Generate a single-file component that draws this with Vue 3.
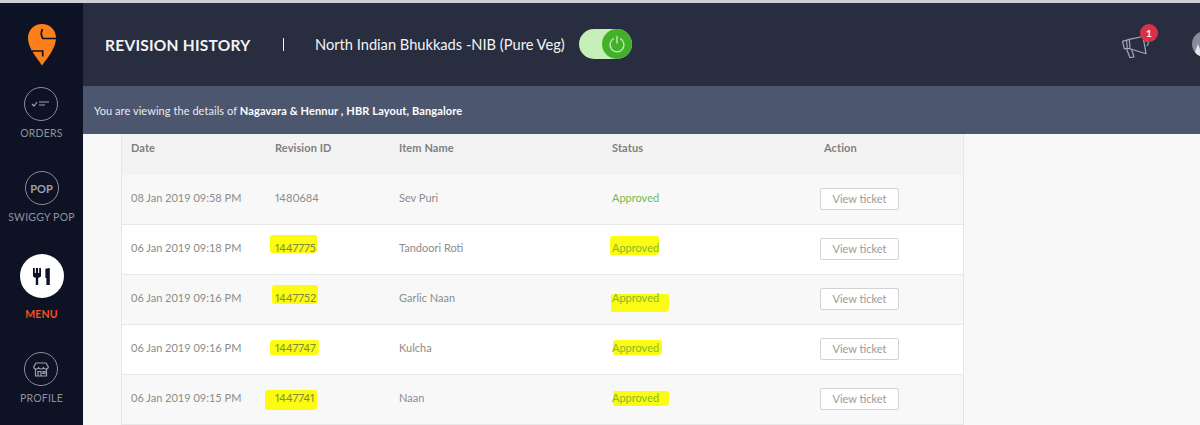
<script setup>
const rows = [
  { date: '08 Jan 2019 09:58 PM', id: '1480684', item: 'Sev Puri' },
  { date: '06 Jan 2019 09:18 PM', id: '1447775', item: 'Tandoori Roti', idMark: { left: -5, top: -6, width: 47, height: 18 }, stMark: { left: -2, top: -5, width: 49, height: 19 } },
  { date: '06 Jan 2019 09:16 PM', id: '1447752', item: 'Garlic Naan', idMark: { left: -3, top: -6, width: 46, height: 19 }, stMark: { left: -1, top: 3, width: 58, height: 18 } },
  { date: '06 Jan 2019 09:16 PM', id: '1447747', item: 'Kulcha', idMark: { left: -5, top: -1, width: 49, height: 15 }, stMark: { left: 1, top: -1, width: 49, height: 15 } },
  { date: '06 Jan 2019 09:15 PM', id: '1447741', item: 'Naan', idMark: { left: -10, top: -1, width: 52, height: 20 }, stMark: { left: 1, top: 0, width: 56, height: 15 } }
]
function box(m) {
  return { left: m.left + 'px', top: m.top + 'px', width: m.width + 'px', height: m.height + 'px' }
}
</script>

<template>
  <div class="page">
    <aside class="side">
      <div class="logo">
        <svg width="28" height="42" viewBox="0 0 28 42">
          <path d="M14 0C6 0 0 6 0 14c0 5 2 9 4 13 3 5 7 10 10 14.500 3-4.500 7-9 10-14.500 2-4 4-8 4-13C28 6 22 0 14 0z" fill="#fc8019" />
          <path d="M14.500 5C13 8 13 12 15 14.500H28M4 27h10.700v5.500" fill="none" stroke="#0d1224" stroke-width="1.700" />
        </svg>
      </div>
      <div class="nav orders">
        <span class="ring">
          <svg width="20" height="10" viewBox="0 0 20 10" fill="none" stroke="#9ea2ae" stroke-width="1.200">
            <path d="M1 5l2 2 3-4M8 3h10M8 6h6" />
          </svg>
        </span>
        <span class="label">ORDERS</span>
      </div>
      <div class="nav pop">
        <span class="ring"><span class="pop-text">POP</span></span>
        <span class="label">SWIGGY POP</span>
      </div>
      <div class="nav menu">
        <span class="ring active">
          <svg width="17" height="17" viewBox="0 0 17 17" fill="#0d1224">
            <path d="M0 0h1.800v5h1.100V0h2.200v5h1.100V0H8v7.500C8 9 7 9.500 5.200 9.800V17H2.800V9.800C1 9.500 0 9 0 7.500z" />
            <path d="M12.400 .8L16.800 0v17h-3.400v-7h-1z" />
          </svg>
        </span>
        <span class="label">MENU</span>
      </div>
      <div class="nav profile">
        <span class="ring">
          <svg width="16" height="15" viewBox="0 0 16 15" fill="none" stroke="#9ea2ae" stroke-width="1.200">
            <path d="M3 1h10l2.300 4c0 1.500-1.500 2-2.600 2-1 0-2-.5-2.300-1.300C10 6.500 9 7 8 7s-2-.5-2.400-1.300C5.300 6.500 4.300 7 3.300 7 2 7 .7 6.500.7 5z" />
            <path d="M2.500 7v7h11V7M5 14V9.500h3V14M10 9.500h2v2h-2z" />
          </svg>
        </span>
        <span class="label">PROFILE</span>
      </div>
    </aside>

    <main class="main">
      <header class="top">
        <h1 class="title">REVISION HISTORY</h1>
        <span class="sep"></span>
        <span class="rest">North Indian Bhukkads -NIB (Pure Veg)</span>
        <span class="toggle">
          <span class="knob">
            <svg width="18" height="18" viewBox="0 0 18 18" fill="none" stroke="#c9efc0" stroke-width="1.300" stroke-linecap="round">
              <path d="M5.400 3.800a7 7 0 1 0 7.200 0M9 1.500v6.500" />
            </svg>
          </span>
        </span>
        <div class="top-right">
          <span class="horn">
            <svg width="27" height="22" viewBox="0 0 27 22" fill="none" stroke="#a3a8b8" stroke-width="1.200" stroke-linejoin="round">
              <path d="M.5 5.300L7.300 3.300 8 12.700l-5.700 0z" />
              <path d="M4.500 4l.8 9" />
              <path d="M7.300 3.300L21 .5 24 17.700 8 12.700" />
              <path d="M23 5c2-.5 3-.2 3.200 1.500.2 1.800-.3 3-1.800 3.500" />
              <path d="M4.700 13.300L8 21.700l4-.7-2.300-7" />
            </svg>
            <b class="badge">1</b>
          </span>
          <span class="avatar">
            <svg width="12" height="13" viewBox="0 0 12 13" fill="#e3e5ea"><path d="M6 0l5 13H1z" /></svg>
          </span>
        </div>
      </header>
      <div class="sub">You are viewing the details of&nbsp;<strong>Nagavara &amp; Hennur , HBR Layout, Bangalore</strong></div>
      <section class="body">
        <div class="table">
          <div class="row head">
            <span>Date</span><span>Revision ID</span><span>Item Name</span><span>Status</span><span class="act-head">Action</span>
          </div>
          <div v-for="(r, i) in rows" :key="r.id + i" class="row line" :class="{ odd: i % 2 === 0 }">
            <span>{{ r.date }}</span>
            <span class="mark-cell num" :class="{ marked: r.idMark }"><i v-if="r.idMark" class="mark" :style="box(r.idMark)"></i><span class="over">{{ r.id }}</span></span>
            <span>{{ r.item }}</span>
            <span class="mark-cell status" :class="{ marked: r.stMark }"><i v-if="r.stMark" class="mark" :style="box(r.stMark)"></i><span class="over">Approved</span></span>
            <span><button class="ticket">View ticket</button></span>
          </div>
        </div>
      </section>
    </main>
  </div>
</template>

<style>
html, body { margin: 0; background: #f8f8f8; overflow: hidden; }
</style>

<style scoped>
.page {
  display: flex;
  width: 1200px;
  height: 425px;
  overflow: hidden;
  font-family: "Lato", "Open Sans", sans-serif;
  border-top: 3px solid #cfd0d3;
  box-sizing: border-box;
}
.side {
  width: 83px;
  flex: none;
  background: #0d1224;
  display: flex;
  flex-direction: column;
  align-items: center;
}
.logo { padding-top: 21px; margin-bottom: 21px; height: 42px; }
.nav { display: flex; flex-direction: column; align-items: center; }
.ring {
  width: 32px;
  height: 32px;
  border: 1.500px solid #8b8f9c;
  border-radius: 50%;
  display: flex;
  align-items: center;
  justify-content: center;
}
.label { font-size: 10.500px; color: #8e919d; letter-spacing: .2px; margin-top: 5px; white-space: nowrap; line-height: 14px; }
.orders { height: 84px; }
.pop { height: 85px; }
.pop-text { font-size: 11px; font-weight: 700; color: #9ea2ae; }
.menu { height: 98px; margin-top: -2px; }
.active { width: 44px; height: 44px; border: 0; background: #fff; }
.menu .label { color: #f4511e; font-weight: 700; margin-top: 9px; }
.main { flex: 1; min-width: 0; display: flex; flex-direction: column; background: #f8f8f8; }
.top {
  height: 83px;
  flex: none;
  background: #282d3f;
  display: flex;
  align-items: center;
  color: #f4f4f6;
  padding-left: 22px;
}
.title { margin: 0; font-size: 15.500px; font-weight: 700; letter-spacing: .25px; white-space: nowrap; width: 178px; }
.sep { width: 1px; height: 13px; background: #f4f4f6; margin-right: 31px; }
.rest { font-size: 14.650px; white-space: nowrap; width: 264px; }
.toggle {
  width: 53px;
  height: 30px;
  border-radius: 15px;
  background: #c5eeb9;
  display: flex;
  justify-content: flex-end;
  margin-top: -1px;
}
.knob {
  width: 30px;
  height: 30px;
  border-radius: 50%;
  background: #43b02a;
  display: flex;
  align-items: center;
  justify-content: center;
}
.top-right { margin-left: auto; display: flex; align-items: center; margin-top: -1px; }
.horn { position: relative; display: block; width: 27px; height: 22px; margin-right: 43px; margin-top: 5px; }
.badge {
  position: absolute;
  left: 18px;
  top: -12px;
  width: 18px;
  height: 18px;
  border-radius: 50%;
  background: #dc3045;
  color: #fff;
  font-size: 10px;
  font-weight: 700;
  line-height: 18px;
  text-align: center;
}
.avatar {
  width: 26px;
  height: 26px;
  flex: none;
  border-radius: 50%;
  background: #878b9b;
  display: flex;
  align-items: flex-end;
  justify-content: flex-start;
  margin-right: -18px;
  overflow: hidden;
}
.sub {
  height: 48px;
  flex: none;
  background: #4c566f;
  color: #e9ebef;
  font-size: 11px;
  letter-spacing: .06px;
  display: flex;
  align-items: center;
  padding-left: 11px;
}
.sub strong { color: #fff; font-weight: 700; letter-spacing: .13px; }
.body { flex: 1; padding-left: 38px; overflow: hidden; }
.table {
  width: 843px;
  box-sizing: border-box;
  border-left: 1px solid #e6e6e6;
  border-right: 1px solid #e6e6e6;
  font-size: 11px;
  color: #8c8c8c;
}
.row {
  display: grid;
  grid-template-columns: 144px 124px 213px 208px 1fr;
  padding-left: 9px;
}
.head {
  height: 41px;
  padding-top: 7px;
  box-sizing: border-box;
  background: #f3f3f3;
  font-weight: 700;
  line-height: 13px;
  color: #808080;
  letter-spacing: .1px;
}
.act-head { padding-left: 4px; }
.line {
  height: 50px;
  box-sizing: border-box;
  background: #fff;
  border-bottom: 1px solid #e8e8e8;
  padding-top: 16px;
  line-height: 14px;
}
.odd { background: #f8f8f8; }
.mark-cell { position: relative; display: block; }
.mark { position: absolute; background: #fbfb14; border-radius: 3px 2px 4px 2px; }
.over { position: relative; }
.num { font-variant-numeric: proportional-nums; }
.marked .over { color: #7f8a3c; }
.status .over { color: #74b84f; }
.status.marked .over { color: #86b92a; }
.ticket {
  display: block;
  width: 79px;
  height: 22px;
  margin-top: -3px;
  background: #fff;
  border: 1px solid #d3d3d3;
  border-radius: 2px;
  box-sizing: border-box;
  padding: 0;
  font: inherit;
  color: #9a9a9a;
}
</style>
